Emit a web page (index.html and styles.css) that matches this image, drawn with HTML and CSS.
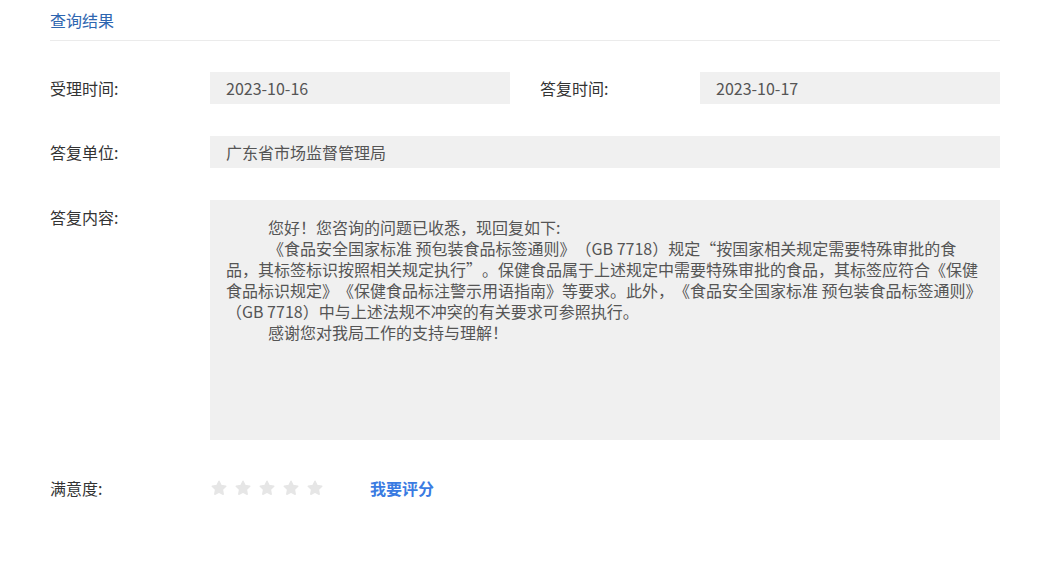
FILE: index.html
```html
<!DOCTYPE html>
<html lang="zh-CN">
<head>
<meta charset="utf-8">
<title>查询结果</title>
<link rel="stylesheet" href="styles.css">
</head>
<body>
<div class="page">
  <div class="title-bar"><span class="title">查询结果</span></div>
  <div class="form">
    <div class="row">
      <div class="label">受理时间:</div>
      <div class="value half">2023-10-16</div>
      <div class="label label-right">答复时间:</div>
      <div class="value half">2023-10-17</div>
    </div>
    <div class="row">
      <div class="label">答复单位:</div>
      <div class="value full">广东省市场监督管理局</div>
    </div>
    <div class="row row-top">
      <div class="label label-top">答复内容:</div>
      <div class="value full content">
        <p class="para">您好！您咨询的问题已收悉，现回复如下:</p>
        <p class="para">《食品安全国家标准 预包装食品标签通则》（GB 7718）规定“按国家相关规定需要特殊审批的食品，其标签标识按照相关规定执行”。保健食品属于上述规定中需要特殊审批的食品，其标签应符合《保健食品标识规定》《保健食品标注警示用语指南》等要求。此外，《食品安全国家标准 预包装食品标签通则》（GB 7718）中与上述法规不冲突的有关要求可参照执行。</p>
        <p class="para">感谢您对我局工作的支持与理解！</p>
      </div>
    </div>
    <div class="row rating">
      <div class="label">满意度:</div>
      <div class="stars">
        <svg class="star" viewBox="0 0 24 24"><path d="M12 3l2.8 5.8 6.2.9-4.5 4.4 1.1 6.2L12 17.4l-5.6 2.9 1.1-6.2L3 9.7l6.2-.9z"/></svg>
        <svg class="star" viewBox="0 0 24 24"><path d="M12 3l2.8 5.8 6.2.9-4.5 4.4 1.1 6.2L12 17.4l-5.6 2.9 1.1-6.2L3 9.7l6.2-.9z"/></svg>
        <svg class="star" viewBox="0 0 24 24"><path d="M12 3l2.8 5.8 6.2.9-4.5 4.4 1.1 6.2L12 17.4l-5.6 2.9 1.1-6.2L3 9.7l6.2-.9z"/></svg>
        <svg class="star" viewBox="0 0 24 24"><path d="M12 3l2.8 5.8 6.2.9-4.5 4.4 1.1 6.2L12 17.4l-5.6 2.9 1.1-6.2L3 9.7l6.2-.9z"/></svg>
        <svg class="star" viewBox="0 0 24 24"><path d="M12 3l2.8 5.8 6.2.9-4.5 4.4 1.1 6.2L12 17.4l-5.6 2.9 1.1-6.2L3 9.7l6.2-.9z"/></svg>
      </div>
      <a class="rate-link" href="#">我要评分</a>
    </div>
  </div>
</div>
</body>
</html>
```

FILE: styles.css
```css
* { box-sizing: border-box; }
html, body { margin: 0; padding: 0; background: #fff; }
body {
  font-family: "Noto Sans CJK SC", "Noto Sans", sans-serif;
  font-size: 16px;
  color: #333;
  text-spacing-trim: space-all;
}
.page {
  width: 950px;
  margin-left: 50px;
}
.title-bar {
  height: 41px;
  border-bottom: 1px solid #ebebeb;
  padding-top: 8px;
}
.title {
  color: #2e66b0;
  font-size: 16px;
  line-height: 24px;
}
.form {
  padding-top: 31px;
  display: flex;
  flex-direction: column;
  gap: 32px;
}
.row {
  display: flex;
  align-items: center;
}
.row-top { align-items: flex-start; }
.label {
  width: 160px;
  flex: none;
  color: #333;
  line-height: 32px;
}
.label-right {
  width: 190px;
  padding-left: 30px;
}
.label-top { line-height: 34px; }
.value {
  background: #f0f0f0;
  color: #555;
  height: 32px;
  line-height: 32px;
  padding-left: 16px;
}
.half { width: 300px; }
.full { width: 790px; }
.content {
  height: 240px;
  line-height: 21px;
  padding: 17px 16px 0 16px;
}
.para {
  margin: 0;
  text-indent: 42px;
}
.rating {
  height: 32px;
}
.stars {
  display: flex;
  gap: 6px;
  width: 160px;
}
.star {
  width: 18px;
  height: 18px;
  fill: #e6e6e6;
  stroke: #e6e6e6;
  stroke-width: 2;
  stroke-linejoin: round;
}
.rate-link {
  color: #3a7be2;
  font-weight: bold;
  text-decoration: none;
}
```
